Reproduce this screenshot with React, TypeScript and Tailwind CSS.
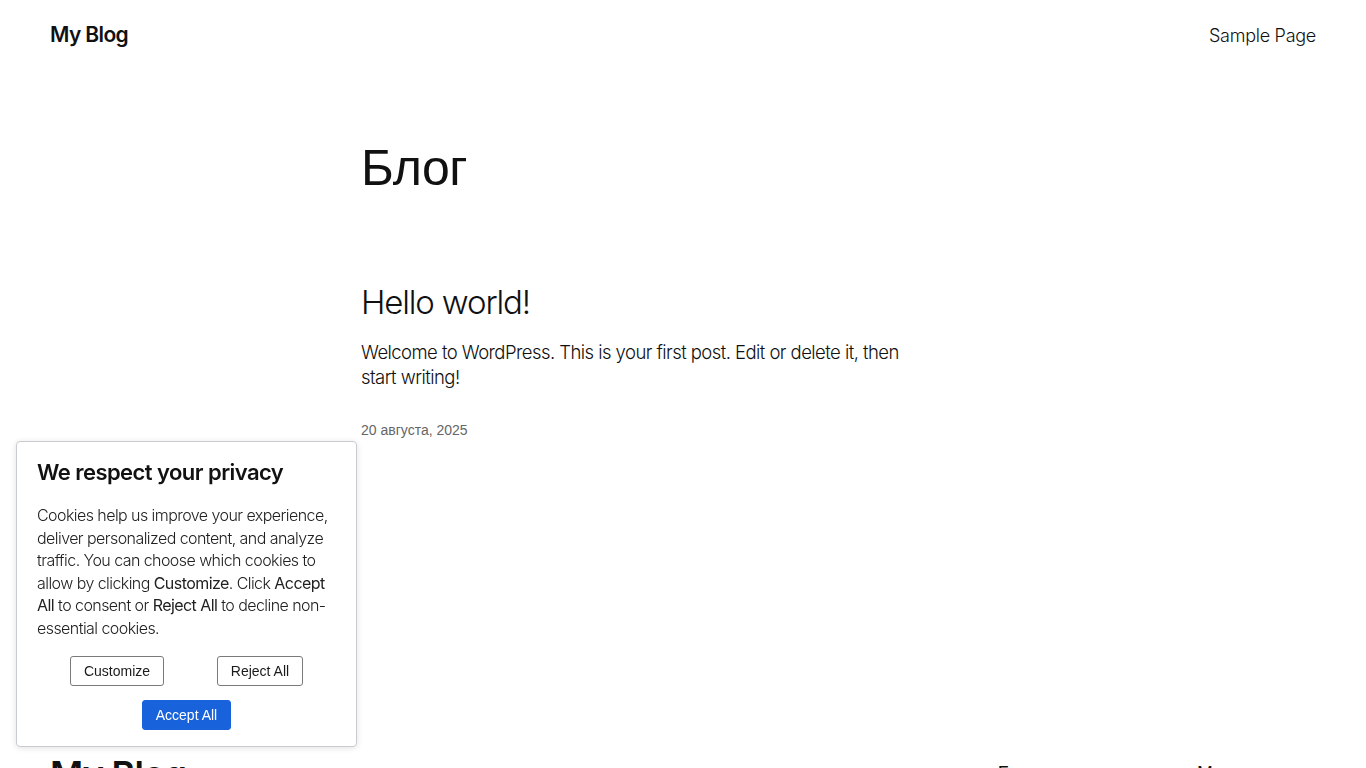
export default function App() {
  return (
    <div className="min-h-screen bg-white text-[#111111] font-['Inter',sans-serif]">
      <header className="flex h-[70px] items-center justify-between px-[50px]">
        <a className="text-[21px] font-semibold tracking-[-0.03em]">My Blog</a>
        <nav className="text-[18px] font-light tracking-[-0.015em]">Sample Page</nav>
      </header>

      <main className="mx-auto w-[644px] pb-[290px] pt-[64px]">
        <h1 className="font-['Liberation_Sans',sans-serif] text-[50px] leading-[68px] tracking-[-0.01em]">Блог</h1>

        <article className="mt-[80px]">
          <h2 className="text-[33px] font-light leading-[40px] tracking-[-0.035em]">Hello world!</h2>
          <p className="mt-[18px] w-[560px] text-[18.5px] font-light leading-[25px] tracking-[-0.03em]">
            Welcome to WordPress. This is your first post. Edit or delete it, then start writing!
          </p>
          <div className="mt-[30px] font-['Liberation_Sans',sans-serif] text-[14px] text-[#666666]">
            20 августа, 2025
          </div>
        </article>
      </main>

      <footer className="flex items-start justify-between px-[50px] pb-[60px] pt-[16px]">
        <div className="text-[36px] font-semibold tracking-[-0.02em]">My Blog</div>
        <div className="mt-[12px] flex gap-[158px] text-[19px] font-light">
          <span className="font-['Liberation_Sans',sans-serif]">Блог</span>
          <span className="font-['Liberation_Sans',sans-serif]">Мероприятия</span>
        </div>
      </footer>

      <div className="fixed bottom-[21px] left-[16px] w-[341px] rounded-[4px] border border-[#c8ccd2] bg-white px-[20px] pb-[16px] pt-[14px] shadow-[0_1px_6px_rgba(0,0,0,0.12)]">
        <h3 className="text-[22px] font-semibold leading-[32px] tracking-[-0.025em] text-[#111111]">We respect your privacy</h3>
        <p className="mt-[16px] text-[16px] font-light leading-[22.5px] tracking-[-0.035em] text-[#212121]">
          Cookies help us improve your experience, deliver personalized content, and analyze traffic. You can choose which cookies to allow by clicking <span className="font-normal">Customize</span>. Click <span className="font-normal">Accept All</span> to consent or <span className="font-normal">Reject All</span> to decline non-essential cookies.
        </p>
        <div className="mt-[17px] flex justify-center gap-[53px] font-['Liberation_Sans',sans-serif] text-[14px]">
          <button className="h-[30px] w-[94px] rounded-[3px] border border-[#7a7a7a] text-[#1a1a1a]">Customize</button>
          <button className="h-[30px] w-[86px] rounded-[3px] border border-[#7a7a7a] text-[#1a1a1a]">Reject All</button>
        </div>
        <div className="mt-[14px] flex justify-center font-['Liberation_Sans',sans-serif] text-[14px]">
          <button className="h-[30px] w-[89px] rounded-[3px] border border-[#1863dc] bg-[#1863dc] text-white">Accept All</button>
        </div>
      </div>
    </div>
  );
}
